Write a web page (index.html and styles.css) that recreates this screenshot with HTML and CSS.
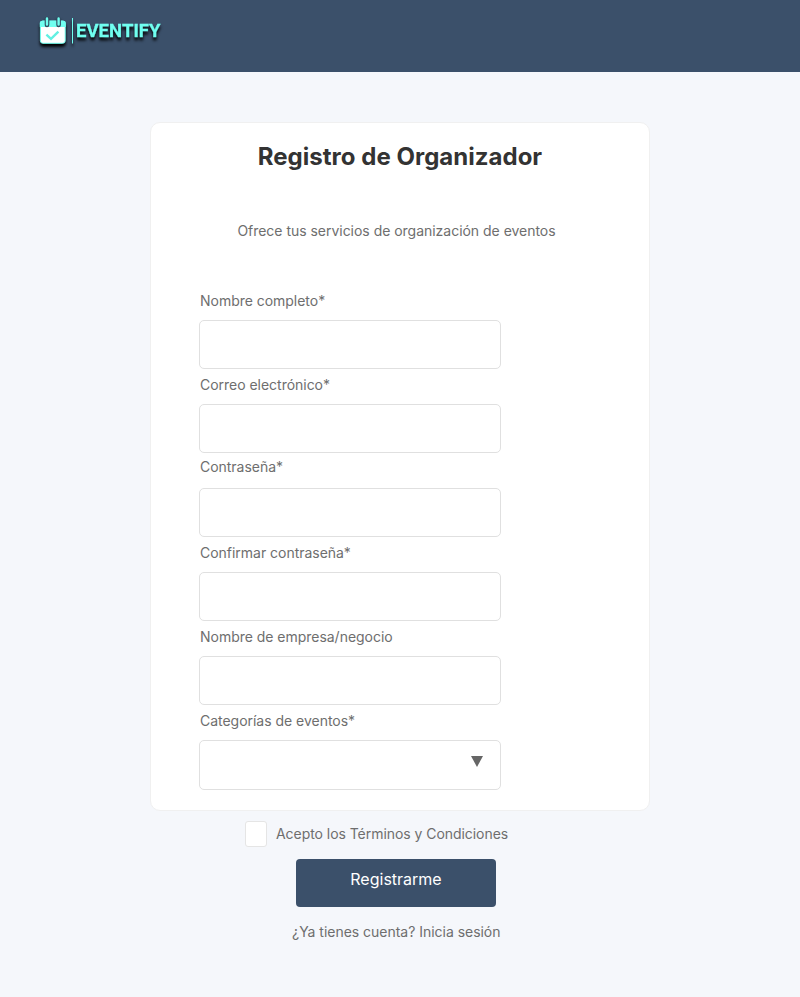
FILE: index.html
```html
<!DOCTYPE html>
<html lang="es">
<head>
<meta charset="utf-8">
<title>Eventify</title>
<link rel="stylesheet" href="styles.css">
</head>
<body>
<header class="topbar">
  <svg class="logo" width="140" height="48" viewBox="0 0 140 48" role="img" aria-label="Eventify">
    <g class="logo-mark">
      <rect x="10.4" y="13" width="24.8" height="22.3" rx="2.5" fill="#fff" stroke="#70fff0" stroke-width="1"/>
      <path d="M9.8 19v-4.3q0-2 2.5-2h21q2.5 0 2.5 2v4.3z" fill="#70fff0"/>
      <path d="M17 11v6M28.6 11v6" stroke="#304b60" stroke-width="4.6" stroke-linecap="round"/>
      <path d="M17 10.4v6.2M28.6 10.4v6.2" stroke="#70fff0" stroke-width="2.4" stroke-linecap="round"/>
      <path d="M16.4 26.6l4.6 4.2 7.4-7.2" fill="none" stroke="#62f0e2" stroke-width="2.4"/>
      <path d="M42.5 10v25.5" stroke="#70fff0" stroke-width="1"/>
      <text class="logo-text" x="46" y="29.2" textLength="84.5">EVENTIFY</text>
    </g>
  </svg>
</header>
<main class="page">
  <section class="card">
    <h1 class="title">Registro de Organizador</h1>
    <p class="subtitle">Ofrece tus servicios de organización de eventos</p>
    <form class="fields">
      <label class="field"><span class="label">Nombre completo*</span><input class="input" type="text"></label>
      <label class="field"><span class="label">Correo electrónico*</span><input class="input" type="email"></label>
      <label class="field field-raised"><span class="label">Contraseña*</span><input class="input" type="password"></label>
      <label class="field"><span class="label">Confirmar contraseña*</span><input class="input" type="password"></label>
      <label class="field"><span class="label">Nombre de empresa/negocio</span><input class="input" type="text"></label>
      <div class="field"><span class="label">Categorías de eventos*</span>
        <div class="input select"><svg width="12" height="11" viewBox="0 0 12 11"><path d="M0 0h12L6 11z" fill="#666"/></svg></div>
      </div>
    </form>
  </section>
  <label class="terms"><span class="checkbox"></span><span>Acepto los Términos y Condiciones</span></label>
  <button class="submit" type="button">Registrarme</button>
  <p class="login">¿Ya tienes cuenta? Inicia sesión</p>
</main>
</body>
</html>
```
FILE: styles.css
```css
* { box-sizing: border-box; }
body {
  margin: 0;
  min-height: 997px;
  background: #f5f7fb;
  font-family: Inter, sans-serif;
  font-size: 14px;
  line-height: 20px;
  letter-spacing: -0.025px;
  color: #6e6e6e;
}
.topbar { height: 72px; padding: 8px 30px; background: #3b506a; }
.logo { display: block; overflow: visible; }
.logo-mark { filter: drop-shadow(0 3px 1.5px #000); }
.logo-text {
  font-family: Roboto, sans-serif;
  font-size: 18.5px;
  font-weight: 700;
  fill: #70fff0;
  stroke: #70fff0;
  stroke-width: 0.3px;
}
.page { display: flex; flex-direction: column; padding: 50px 150px 0; }
.card {
  height: 689px;
  padding: 18px 49px 0;
  background: #fff;
  border: 1px solid #f0f0f0;
  border-radius: 10px;
}
.title {
  margin: 0;
  font-size: 24px;
  line-height: 31px;
  font-weight: 700;
  letter-spacing: 0.02px;
  text-align: center;
  color: #333;
}
.subtitle { margin: 49px 0 0; padding-right: 7px; text-align: center; }
.fields { margin-top: 49px; }
.field { display: flex; flex-direction: column; height: 84px; }
.label { height: 30px; line-height: 22px; }
.field-raised .label { line-height: 18px; }
.input {
  width: 302px;
  height: 49px;
  margin: 0 0 0 -1px;
  padding: 0 17px;
  background: #fff;
  border: 1px solid #e0e0e0;
  border-radius: 5px;
}
.select { display: flex; justify-content: flex-end; height: 50px; padding-top: 15px; }
.terms { display: flex; align-items: center; gap: 9px; height: 26px; margin: 10px 0 0 95px; letter-spacing: -0.05px; }
.checkbox { width: 22px; height: 26px; background: #fff; border: 1px solid #e5e5e5; border-radius: 3px; }
.submit {
  width: 200px;
  height: 48px;
  margin: 12px 0 0 146px;
  padding: 0 0 8px;
  background: #3b506a;
  border: 0;
  border-radius: 4px;
  color: #fff;
  font: 16px/20px Inter, sans-serif;
}
.login { margin: 15px 0 0 142px; }
```
